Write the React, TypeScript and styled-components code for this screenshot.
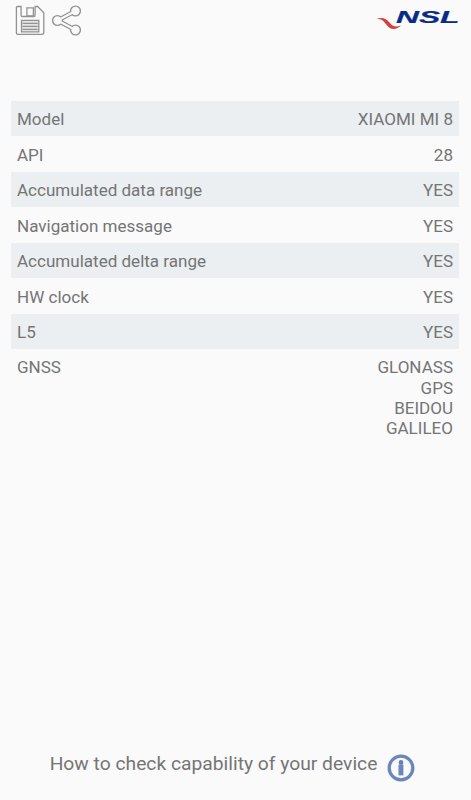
import React from "react";
import styled, { createGlobalStyle } from "styled-components";

const GlobalStyle = createGlobalStyle`
  body { margin: 0; background: #fafafa; }
`;

const Screen = styled.main`
  box-sizing: border-box;
  height: 800px;
  display: flex;
  flex-direction: column;
  background: #fafafa;
  color: #757575;
  font-family: Roboto, sans-serif;
`;

const Toolbar = styled.header`
  display: flex;
  align-items: flex-start;
  height: 101px;
  box-sizing: border-box;
  padding: 5px 10px 0 15px;
`;

const IconButton = styled.button`
  display: block;
  padding: 0;
  margin: 0 6px 0 0;
  border: 0;
  background: none;
  line-height: 0;
`;

const Brand = styled.div`
  margin: 4px 0 0 auto;
  line-height: 0;
`;

const Table = styled.dl`
  margin: 0 12px 0 11px;
`;

const Row = styled.div<{ $shaded: boolean }>`
  display: flex;
  justify-content: space-between;
  box-sizing: border-box;
  min-height: 35.45px;
  padding: 8.4px 6px 6.6px;
  background: ${({ $shaded }) => ($shaded ? "#ebeff2" : "transparent")};
  font-size: 17.05px;
  line-height: 20.1px;
`;

const Label = styled.dt``;

const Value = styled.dd`
  margin: 0;
  text-align: right;
`;

const Line = styled.div``;

const Footer = styled.footer`
  display: flex;
  align-items: flex-start;
  justify-content: center;
  gap: 10px;
  margin-top: auto;
  height: 48px;
  padding-right: 6px;
  font-size: 19.25px;
  line-height: 24px;
`;

const InfoButton = styled(IconButton)`
  margin: 2px 0 0;
`;

const rows: { label: string; values: string[] }[] = [
  { label: "Model", values: ["XIAOMI MI 8"] },
  { label: "API", values: ["28"] },
  { label: "Accumulated data range", values: ["YES"] },
  { label: "Navigation message", values: ["YES"] },
  { label: "Accumulated delta range", values: ["YES"] },
  { label: "HW clock", values: ["YES"] },
  { label: "L5", values: ["YES"] },
  { label: "GNSS", values: ["GLONASS", "GPS", "BEIDOU", "GALILEO"] },
];

const SaveIcon = () => (
  <svg width="30" height="31" viewBox="0 0 30 31" fill="none" stroke="#929292" strokeWidth="1.3">
    <path d="M2.6 1.5H6.1V10.2Q6.1 11.5 7.4 11.5H18.8Q20.1 11.5 20.1 10.2V1.5H22.6L28.8 7.8V27.8Q28.8 29.4 27.2 29.4H2.8Q1.4 29.4 1.4 27.8V2.8Q1.4 1.5 2.6 1.5Z" />
    <path d="M11.9 2.8H18.4V11H11.9Z" />
    <path d="M6.5 15.4H23.8V26.8H6.5Z" fill="#e4e4e4" />
    <path d="M7.5 18.4H22.6M7.5 21.4H22.6M7.5 24.4H22.6" strokeWidth="1.4" />
  </svg>
);

const ShareIcon = () => (
  <svg width="32" height="31" viewBox="0 0 32 31" fill="none">
    <path d="M24.5 6L6.5 15.5L24.5 25" stroke="#929292" strokeWidth="4.6" />
    <g stroke="#929292" strokeWidth="1.4" fill="#fafafa">
      <circle cx="24.5" cy="6" r="4.9" />
      <circle cx="6.5" cy="15.5" r="4.9" />
      <circle cx="24.5" cy="25" r="4.9" />
    </g>
    <path d="M24.5 6L6.5 15.5L24.5 25" stroke="#fafafa" strokeWidth="2.1" />
  </svg>
);

const Logo = () => (
  <svg width="85" height="23" viewBox="0 0 85 23">
    <path
      d="M0 10.3C5.5 7.8 9.5 9 13 13C15.8 16.4 18.6 19 25 16.6C21 20.7 15.5 21.4 12 17.6C8 13.2 6.4 9.2 0 10.3Z"
      fill="#d63d3f"
    />
    <text
      x="20"
      y="13.6"
      textLength="63.5"
      lengthAdjust="spacingAndGlyphs"
      fontFamily="Liberation Sans, sans-serif"
      fontSize="16"
      fontWeight="700"
      fontStyle="italic"
      fill="#092b87"
      stroke="#092b87"
      strokeWidth="0.2"
    >
      NSL
    </text>
  </svg>
);

const InfoIcon = () => (
  <svg width="28" height="28" viewBox="0 0 28 28">
    <circle cx="14" cy="14" r="11.8" fill="none" stroke="#6c86bd" strokeWidth="3.3" />
    <circle cx="14" cy="8.5" r="2.4" fill="#6681bb" />
    <path d="M11.5 10.5H16.4V21.4H11.5Z" fill="#6c86bd" />
  </svg>
);

export default function App() {
  return (
    <Screen>
      <GlobalStyle />
      <Toolbar>
        <IconButton aria-label="Save"><SaveIcon /></IconButton>
        <IconButton aria-label="Share"><ShareIcon /></IconButton>
        <Brand><Logo /></Brand>
      </Toolbar>
      <Table>
        {rows.map(({ label, values }, index) => (
          <Row key={label} $shaded={index % 2 === 0}>
            <Label>{label}</Label>
            <Value>
              {values.map((value) => <Line key={value}>{value}</Line>)}
            </Value>
          </Row>
        ))}
      </Table>
      <Footer>
        <span>How to check capability of your device</span>
        <InfoButton aria-label="Information"><InfoIcon /></InfoButton>
      </Footer>
    </Screen>
  );
}
